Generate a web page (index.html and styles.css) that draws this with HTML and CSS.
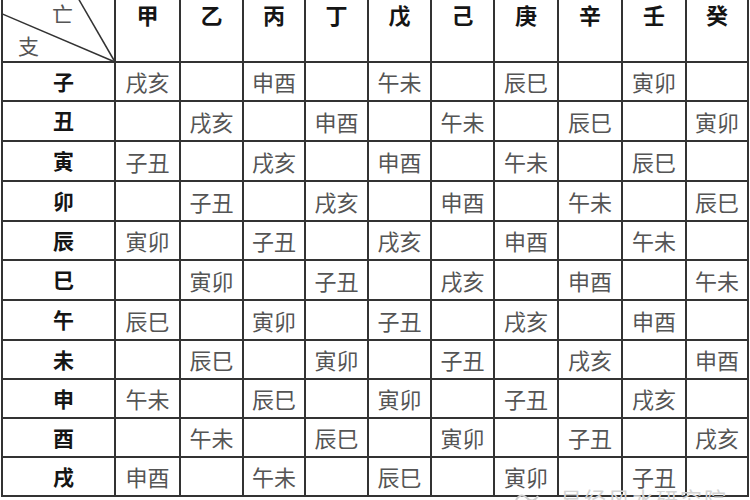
FILE: index.html
```html
<!DOCTYPE html>
<html lang="zh">
<head>
<meta charset="utf-8">
<link rel="stylesheet" href="styles.css">
</head>
<body>
<div class="page">
  <div class="grid">
    <div class="cell head corner">
      <svg class="diag" width="113" height="63" viewBox="0 0 113 63">
        <line x1="-3" y1="13" x2="112" y2="62" stroke="#333" stroke-width="1.5"/>
        <line x1="75" y1="-2" x2="112" y2="62" stroke="#333" stroke-width="1.5"/>
      </svg>
      <span class="gan">亡</span>
      <span class="zhi">支</span>
    </div>
    <div class="cell head">甲</div><div class="cell head">乙</div><div class="cell head">丙</div><div class="cell head">丁</div><div class="cell head">戊</div><div class="cell head">己</div><div class="cell head">庚</div><div class="cell head">辛</div><div class="cell head">壬</div><div class="cell head">癸</div>

    <div class="cell label">子</div><div class="cell">戌亥</div><div class="cell"></div><div class="cell">申酉</div><div class="cell"></div><div class="cell">午未</div><div class="cell"></div><div class="cell">辰巳</div><div class="cell"></div><div class="cell">寅卯</div><div class="cell"></div>
    <div class="cell label">丑</div><div class="cell"></div><div class="cell">戌亥</div><div class="cell"></div><div class="cell">申酉</div><div class="cell"></div><div class="cell">午未</div><div class="cell"></div><div class="cell">辰巳</div><div class="cell"></div><div class="cell">寅卯</div>
    <div class="cell label">寅</div><div class="cell">子丑</div><div class="cell"></div><div class="cell">戌亥</div><div class="cell"></div><div class="cell">申酉</div><div class="cell"></div><div class="cell">午未</div><div class="cell"></div><div class="cell">辰巳</div><div class="cell"></div>
    <div class="cell label">卯</div><div class="cell"></div><div class="cell">子丑</div><div class="cell"></div><div class="cell">戌亥</div><div class="cell"></div><div class="cell">申酉</div><div class="cell"></div><div class="cell">午未</div><div class="cell"></div><div class="cell">辰巳</div>
    <div class="cell label">辰</div><div class="cell">寅卯</div><div class="cell"></div><div class="cell">子丑</div><div class="cell"></div><div class="cell">戌亥</div><div class="cell"></div><div class="cell">申酉</div><div class="cell"></div><div class="cell">午未</div><div class="cell"></div>
    <div class="cell label">巳</div><div class="cell"></div><div class="cell">寅卯</div><div class="cell"></div><div class="cell">子丑</div><div class="cell"></div><div class="cell">戌亥</div><div class="cell"></div><div class="cell">申酉</div><div class="cell"></div><div class="cell">午未</div>
    <div class="cell label">午</div><div class="cell">辰巳</div><div class="cell"></div><div class="cell">寅卯</div><div class="cell"></div><div class="cell">子丑</div><div class="cell"></div><div class="cell">戌亥</div><div class="cell"></div><div class="cell">申酉</div><div class="cell"></div>
    <div class="cell label">未</div><div class="cell"></div><div class="cell">辰巳</div><div class="cell"></div><div class="cell">寅卯</div><div class="cell"></div><div class="cell">子丑</div><div class="cell"></div><div class="cell">戌亥</div><div class="cell"></div><div class="cell">申酉</div>
    <div class="cell label">申</div><div class="cell">午未</div><div class="cell"></div><div class="cell">辰巳</div><div class="cell"></div><div class="cell">寅卯</div><div class="cell"></div><div class="cell">子丑</div><div class="cell"></div><div class="cell">戌亥</div><div class="cell"></div>
    <div class="cell label">酉</div><div class="cell"></div><div class="cell">午未</div><div class="cell"></div><div class="cell">辰巳</div><div class="cell"></div><div class="cell">寅卯</div><div class="cell"></div><div class="cell">子丑</div><div class="cell"></div><div class="cell">戌亥</div>
    <div class="cell label">戌</div><div class="cell">申酉</div><div class="cell"></div><div class="cell">午未</div><div class="cell"></div><div class="cell">辰巳</div><div class="cell"></div><div class="cell">寅卯</div><div class="cell"></div><div class="cell">子丑</div><div class="cell"></div>
  </div>
  <div class="watermark">
    <svg class="wm-icon" width="30" height="20" viewBox="0 0 30 20"><path d="M4 12 Q9 4 15 10 Q21 16 26 8" fill="none" stroke="#cfcfcf" stroke-width="2"/></svg>
    <span>易经风水研究院</span>
  </div>
</div>
</body>
</html>
```
FILE: styles.css
```css
html, body {
  margin: 0;
  padding: 0;
  background: #fff;
  overflow: hidden;
}
.page {
  position: relative;
  width: 750px;
  height: 500px;
  overflow: hidden;
  font-family: "Noto Sans CJK SC", "Noto Sans CJK TC", sans-serif;
}
.grid {
  margin-left: 1px;
  display: grid;
  grid-template-columns: 113px 65px 63px 62px 63px 63px 63px 64px 64px 64px 62px;
  grid-template-rows: 63px 39px 40px 40px 40px 39px 40px 40px 39px 39px 39px 39px;
  border-left: 2px solid #333;
  width: 748px;
  box-sizing: border-box;
}
.cell {
  box-sizing: border-box;
  border-right: 2px solid #333;
  border-bottom: 2px solid #333;
  display: flex;
  align-items: center;
  justify-content: center;
  font-size: 22px;
  color: #555;
  line-height: 1.3;
}
.head {
  align-items: flex-start;
  padding-top: 0;
  font-size: 22px;
  font-weight: 700;
  color: #151515;
}
.label {
  font-weight: 700;
  color: #151515;
  font-size: 21px;
  padding-left: 10px;
}
.corner {
  position: relative;
}
.diag {
  position: absolute;
  left: 0;
  top: 0;
}
.gan {
  position: absolute;
  left: 49px;
  top: 0;
  font-size: 21px;
  color: #555;
  font-weight: 400;
}
.zhi {
  position: absolute;
  left: 15px;
  top: 32px;
  font-size: 21px;
  color: #555;
  font-weight: 400;
}
.watermark {
  position: absolute;
  left: 512px;
  top: 484px;
  display: flex;
  align-items: flex-start;
  gap: 18px;
  font-size: 22px;
  line-height: 1.3;
  color: #d4d4d4;
  letter-spacing: 2px;
  white-space: nowrap;
}
.wm-icon {
  margin-top: 4px;
}
```
